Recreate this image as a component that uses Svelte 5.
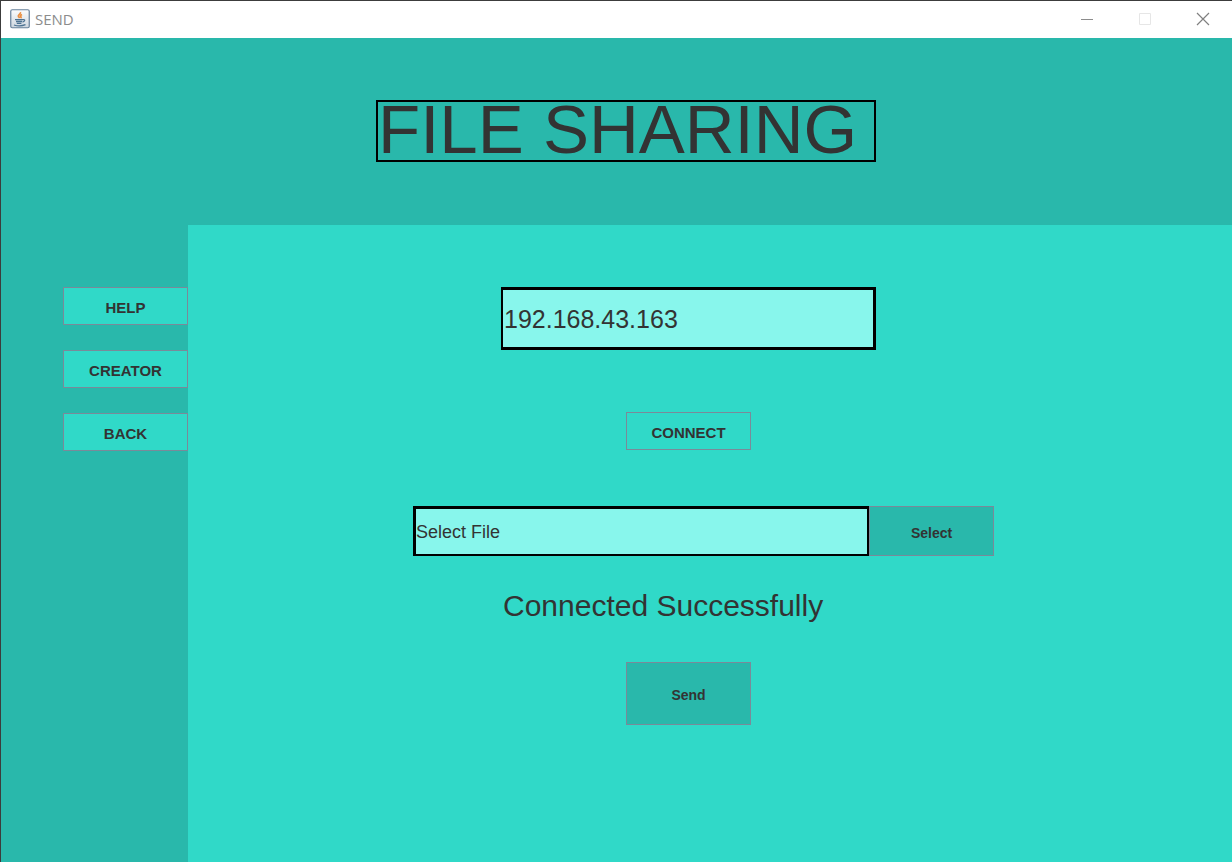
<script>
  let address = $state('192.168.43.163');
  let file = $state('Select File');
  const links = ['HELP', 'CREATOR', 'BACK'];
</script>

<div class="window">
  <header class="titlebar">
    <svg class="logo" width="20" height="20" viewBox="0 0 20 20" aria-hidden="true">
      <defs>
        <linearGradient id="plate" x1="0" y1="0" x2="0" y2="1">
          <stop offset="0" stop-color="#fbfcfd" />
          <stop offset="1" stop-color="#cdd6df" />
        </linearGradient>
      </defs>
      <rect x=".75" y=".75" width="18.5" height="18" rx="1.5" fill="url(#plate)" stroke="#67819b" stroke-width="1.2" />
      <path d="M10.400 3.200c.8 1.700-2.800 2.500-2 4.100.3.700 1 1.100 1.100 1.900M12 5.400c-1.900.9-1.700 1.600-1 2.500.3.500 0 .9-.4 1.200" fill="none" stroke="#ea9044" stroke-width="1.700" />
      <path d="M5 10.600h8M6 12.500h6M6.800 14.300h4.600M13 10.600c2.400-.4 2.200 2-.5 2.400M4 16c3 1 8.500.9 11.500-.3" fill="none" stroke="#4c7292" stroke-width="1.300" />
    </svg>
    <span class="caption">SEND</span>
    <div class="controls">
      <button aria-label="Minimize"><svg width="14" height="14" viewBox="0 0 14 14"><path d="M1 7.500h12" stroke="#8c8c8c" /></svg></button>
      <button aria-label="Maximize" disabled><svg width="14" height="14" viewBox="0 0 14 14"><path d="M1.500 1.500h11v11h-11z" fill="none" stroke="#e6e6e6" /></svg></button>
      <button aria-label="Close"><svg width="14" height="14" viewBox="0 0 14 14"><path d="M1 1l12 12M13 1L1 13" stroke="#808080" stroke-width="1.200" /></svg></button>
    </div>
  </header>

  <div class="banner"><h1>FILE SHARING</h1></div>

  <div class="body">
    <nav>
      {#each links as label}
        <button class="btn light">{label}</button>
      {/each}
    </nav>
    <main>
      <form onsubmit={(e) => e.preventDefault()}>
        <input class="address" aria-label="IP address" bind:value={address} />
        <button class="btn light connect" type="button">CONNECT</button>
        <div class="picker">
          <input aria-label="File" bind:value={file} />
          <button class="btn dark" type="button">Select</button>
        </div>
        <p>Connected Successfully</p>
        <button class="btn dark send">Send</button>
      </form>
    </main>
  </div>
</div>

<style>
  :global(body) {
    margin: 0;
  }
  .window {
    box-sizing: border-box;
    min-height: 100vh;
    display: flex;
    flex-direction: column;
    border-top: 1px solid #3c3c3c;
    border-left: 1px solid #3c3c3c;
    background: #29b8ab;
    color: #333;
    font-family: "Liberation Sans", Arial, sans-serif;
  }
  .titlebar {
    box-sizing: border-box;
    display: flex;
    align-items: center;
    height: 37px;
    padding: 0 0 2px 9px;
    background: #fff;
  }
  .caption {
    margin-left: 5px;
    font: 15px/20px "Open Sans", sans-serif;
    color: #8c8c8c;
  }
  .controls {
    display: flex;
    margin-left: auto;
  }
  .controls button {
    display: grid;
    place-items: center;
    width: 58px;
    height: 35px;
    padding: 0;
    border: 0;
    background: none;
  }
  .banner {
    padding: 62px 0 63px 375px;
  }
  h1 {
    box-sizing: border-box;
    width: 500px;
    height: 62px;
    margin: 0;
    border: 2px solid #000;
    font-size: 69px;
    font-weight: 400;
    line-height: 56px;
    white-space: nowrap;
  }
  .body {
    flex: 1;
    display: flex;
  }
  nav {
    box-sizing: border-box;
    flex: none;
    width: 187px;
    padding: 62px 0 0 62px;
    display: flex;
    flex-direction: column;
    gap: 25px;
  }
  main {
    flex: 1;
    padding: 62px 0 0 225px;
    background: #30d9c8;
  }
  .btn {
    box-sizing: border-box;
    width: 125px;
    height: 38px;
    padding: 3px 0 0;
    border: 1px solid #7a8a99;
    color: #333;
    font: bold 15px/18px "Liberation Sans", Arial, sans-serif;
  }
  .light {
    background: #30d9c8;
  }
  .dark {
    background: #29b8ab;
  }
  form {
    display: grid;
    grid-template-columns: 88px 125px 125px 125px 118px;
  }
  input {
    box-sizing: border-box;
    min-width: 0;
    margin: 0;
    padding: 2px 0 0;
    border: 3px solid #000;
    border-radius: 0;
    background: #88f6ec;
    color: #333;
    font: 18px "Liberation Sans", Arial, sans-serif;
    outline: 0;
  }
  .address {
    grid-column: 2 / 5;
    height: 63px;
    padding-left: 1px;
    border-left-width: 2px;
    font-size: 25px;
  }
  .connect {
    grid-column: 3;
    margin-top: 62px;
  }
  .picker {
    grid-column: 1 / -1;
    display: flex;
    height: 50px;
    margin-top: 56px;
  }
  .picker input {
    flex: 1;
    border-right-width: 2px;
    border-bottom-width: 2px;
  }
  .picker .btn {
    height: 50px;
    font-size: 14px;
  }
  p {
    grid-column: 2 / -1;
    margin: 33px 0 0 2px;
    font-size: 30px;
    line-height: 34px;
  }
  .send {
    grid-column: 3;
    height: 63px;
    margin-top: 39px;
    padding-top: 2px;
    font-size: 14px;
  }
</style>
